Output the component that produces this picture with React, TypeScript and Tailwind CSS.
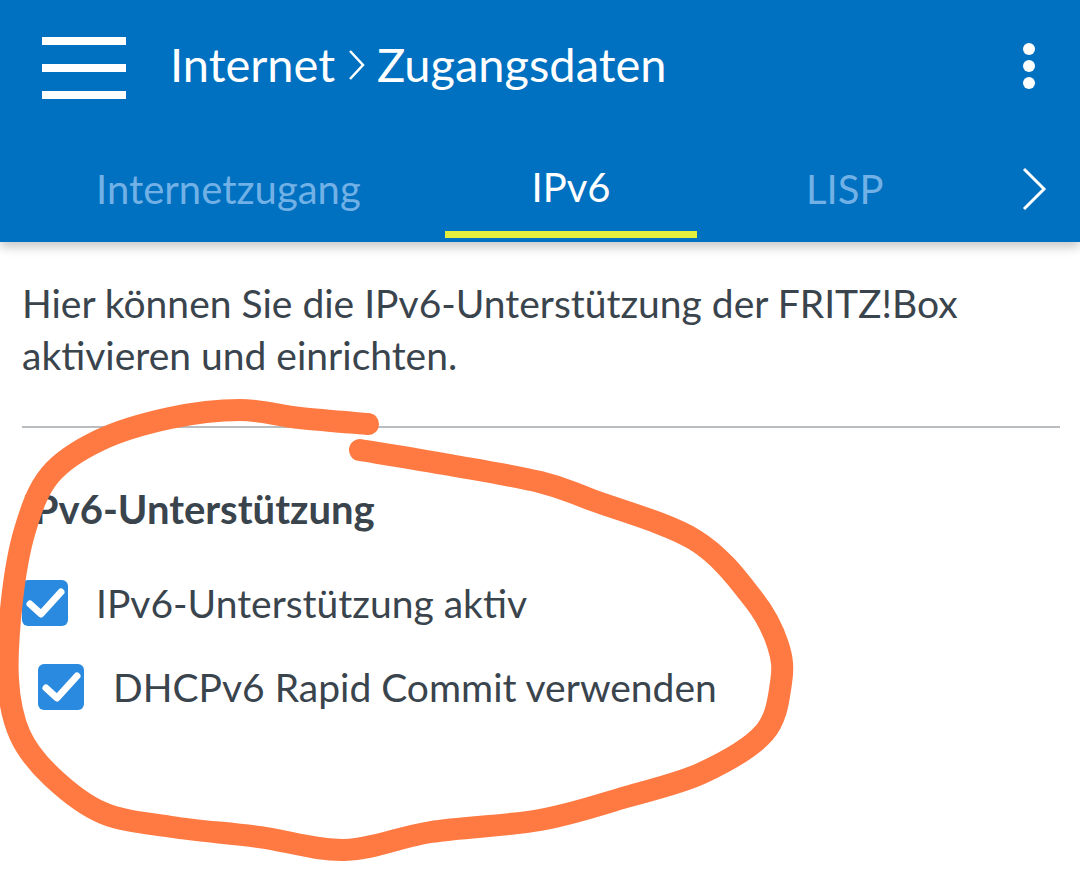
import React from "react";

const FONT = { fontFamily: '"Lato", "Noto Sans", sans-serif' };

// hand-drawn marker loop, traced from the screenshot
const loop: [number, number][] = [
  [368, 424], [300, 418], [240, 410], [170, 418], [100, 440], [50, 475], [25, 530],
  [12, 600], [8, 680], [20, 735], [52, 777], [103, 813], [172, 827], [259, 837],
  [345, 850], [431, 832], [540, 820], [626, 797], [702, 773], [764, 733], [781, 683],
  [778, 645], [754, 600], [695, 540], [592, 500], [540, 482], [450, 465], [360, 450],
];

function smooth(pts: [number, number][]) {
  let d = `M${pts[0][0]} ${pts[0][1]}`;
  for (let i = 0; i < pts.length - 1; i++) {
    const p0 = pts[i - 1] ?? pts[i];
    const p1 = pts[i];
    const p2 = pts[i + 1];
    const p3 = pts[i + 2] ?? p2;
    const c1x = p1[0] + (p2[0] - p0[0]) / 6;
    const c1y = p1[1] + (p2[1] - p0[1]) / 6;
    const c2x = p2[0] - (p3[0] - p1[0]) / 6;
    const c2y = p2[1] - (p3[1] - p1[1]) / 6;
    d += ` C${c1x} ${c1y} ${c2x} ${c2y} ${p2[0]} ${p2[1]}`;
  }
  return d;
}

function Check() {
  return (
    <div className="w-[46px] h-[46px] rounded-[6px] bg-[#2a8ae0] flex items-center justify-center shrink-0">
      <svg width="46" height="46" viewBox="0 0 46 46">
        <path d="M8 24 L19 34 L39 12" fill="none" stroke="white" strokeWidth="7" strokeLinecap="round" strokeLinejoin="round" />
      </svg>
    </div>
  );
}

export default function App() {
  return (
    <div className="relative w-[1080px] h-[887px] bg-white overflow-hidden" style={FONT}>
      <header className="relative z-10 bg-[#0070c0] h-[242px] flex flex-col shadow-[0_5px_10px_rgba(0,0,0,0.22)]">
        <div className="h-[135px] flex items-center">
          <div className="ml-[42px] w-[84px] flex flex-col gap-[19px]">
            <span className="block h-[8px] bg-white" />
            <span className="block h-[8px] bg-white" />
            <span className="block h-[8px] bg-white" />
          </div>
          <div className="ml-[44px] mb-[6px] flex items-center text-white text-[47px] leading-none">
            <span>Internet</span>
            <svg width="30" height="40" viewBox="0 0 30 40" className="mx-[6px]">
              <path d="M9 6 L22 20 L9 34" fill="none" stroke="white" strokeWidth="2.5" />
            </svg>
            <span>Zugangsdaten</span>
          </div>
          <div className="ml-auto mr-[45px] mb-[4px] flex flex-col gap-[5px]">
            <span className="block w-[12px] h-[12px] rounded-full bg-white" />
            <span className="block w-[12px] h-[12px] rounded-full bg-white" />
            <span className="block w-[12px] h-[12px] rounded-full bg-white" />
          </div>
        </div>
        <div className="flex-1 flex">
          <div className="w-[445px] pl-[96px] flex items-center text-[40px] text-[#72b1e6] leading-none">
            Internetzugang
          </div>
          <div className="w-[252px] flex items-center justify-center pt-[7px] mb-[4px] border-b-[7px] border-[#e4ef3d] text-[40px] text-white leading-none">
            IPv6
          </div>
          <div className="flex-1 pl-[109px] flex items-center text-[40px] text-[#72b1e6] leading-none">
            LISP
          </div>
          <div className="pr-[32px] flex items-center">
            <svg width="28" height="46" viewBox="0 0 28 46">
              <path d="M4 3 L24 23 L4 43" fill="none" stroke="white" strokeWidth="3" />
            </svg>
          </div>
        </div>
      </header>

      <main className="px-[22px] text-[#3a444d]">
        <p className="pt-[35px] text-[39px] leading-[52px]">
          Hier können Sie die IPv6-Unterstützung der FRITZ!Box aktivieren und einrichten.
        </p>
        <div className="mt-[45px] h-[2px] bg-[#b9bdc0] mr-[-2px]" />
        <h2 className="mt-[59px] text-[40px] font-bold leading-[44px]">IPv6-Unterstützung</h2>
        <div className="mt-[49px] flex items-center gap-[28px]">
          <Check />
          <span className="text-[39px] leading-none">IPv6-Unterstützung aktiv</span>
        </div>
        <div className="mt-[38px] ml-[16px] flex items-center gap-[29px]">
          <Check />
          <span className="text-[39px] leading-none">DHCPv6 Rapid Commit verwenden</span>
        </div>
      </main>

      <svg className="absolute inset-0 z-20 pointer-events-none" width="1080" height="887" viewBox="0 0 1080 887">
        <path d={smooth(loop)} fill="none" stroke="#ff7a42" strokeWidth="22" strokeLinecap="round" strokeLinejoin="round" />
      </svg>
    </div>
  );
}
